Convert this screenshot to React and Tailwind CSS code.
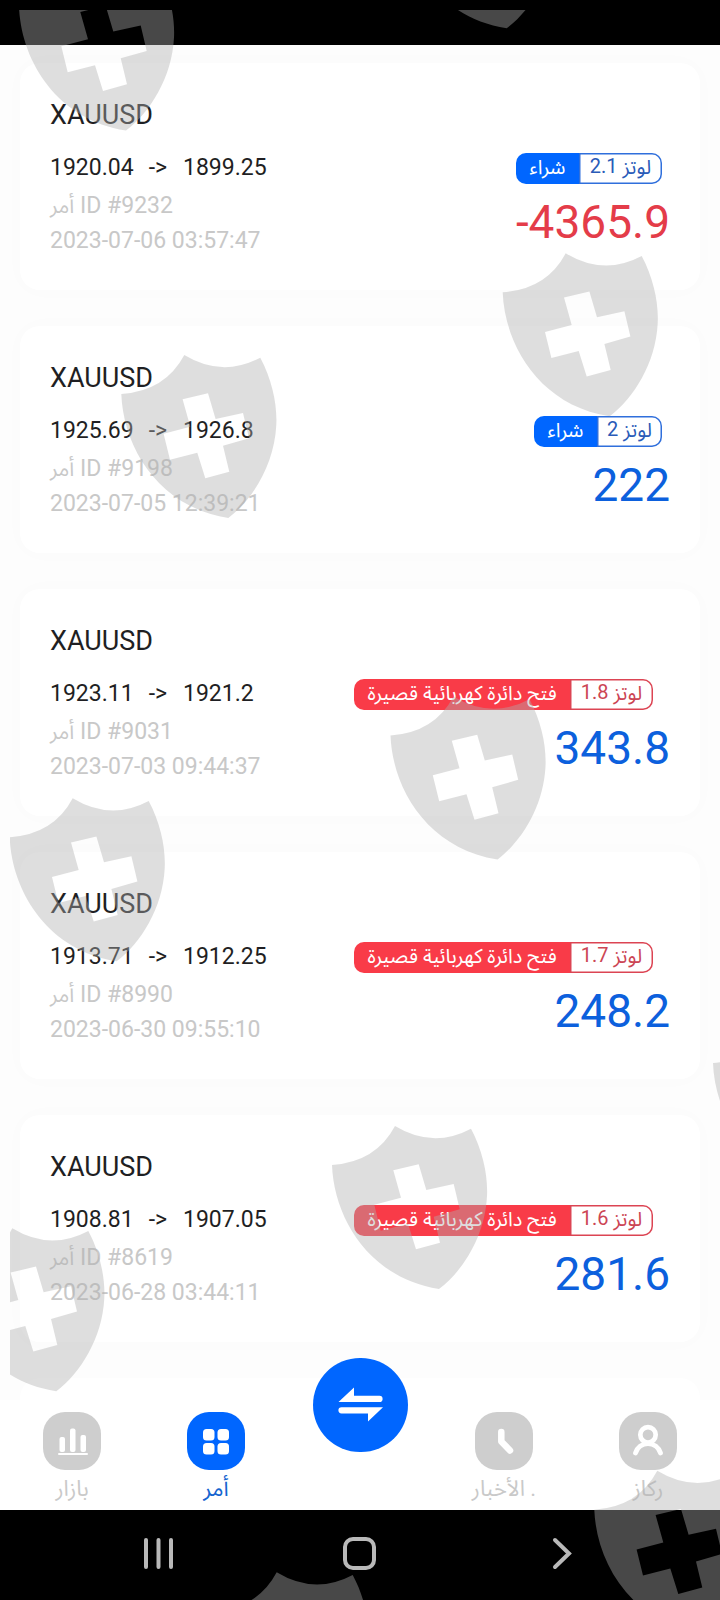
import { clsx } from 'clsx';

const orders = [
  { id: 9232, open: '1920.04', close: '1899.25', time: '2023-07-06 03:57:47', side: 'buy', lots: '2.1', profit: -4365.9 },
  { id: 9198, open: '1925.69', close: '1926.8', time: '2023-07-05 12:39:21', side: 'buy', lots: '2', profit: 222 },
  { id: 9031, open: '1923.11', close: '1921.2', time: '2023-07-03 09:44:37', side: 'sell', lots: '1.8', profit: 343.8 },
  { id: 8990, open: '1913.71', close: '1912.25', time: '2023-06-30 09:55:10', side: 'sell', lots: '1.7', profit: 248.2 },
  { id: 8619, open: '1908.81', close: '1907.05', time: '2023-06-28 03:44:11', side: 'sell', lots: '1.6', profit: 281.6 },
];

// top notch of each shield
const shields = [
  [82, -32.4], [462.7, -134.7], [565.7, 253.3], [184.3, 355], [453.5, 696.5], [72.7, 798.3],
  [395, 1126], [12.3, 1228.3], [657.3, 1470.7], [276.7, 1572.3], [776, 1024],
];

function SideBadge({ side, lots }) {
  const buy = side === 'buy';
  return (
    <div className={clsx('flex h-[31px] text-[20px] leading-[29px]', buy ? 'mr-[8px]' : 'mr-[17px]')}>
      <div
        className={clsx(
          'flex justify-center rounded-l-[10px] text-white',
          buy ? 'w-[63px] bg-[#0066ff]' : 'w-[216px] bg-[#f93b48]'
        )}
      >
        <span dir="rtl">{buy ? 'شراء' : 'فتح دائرة كهربائية قصيرة'}</span>
      </div>
      <div
        className={clsx(
          'flex justify-center rounded-r-[10px]',
          lots.length > 1 ? 'w-[83px]' : 'w-[65px]',
          buy
            ? 'text-[#2a5bb8] shadow-[inset_0_0_0_1.5px_#2f6fdc]'
            : 'text-[#cc4554] shadow-[inset_0_0_0_1.5px_#dc4453]'
        )}
      >
        <span dir="rtl">
          لوتز <span className="relative -top-px">{lots}</span>
        </span>
      </div>
    </div>
  );
}

function OrderCard({ order }) {
  return (
    <div className="flex h-[227px] shrink-0 justify-between rounded-[20px] bg-white pt-[37px] pr-[30px] pl-[30px] shadow-[0_0_24px_rgba(0,0,0,0.016)]">
      <div>
        <div className="h-[54px] text-[27px] leading-[30px] text-[#1f1f23]">XAUUSD</div>
        <div className="flex h-[31px] text-[23px] leading-[28px] text-[#1f1f23]">
          <span>{order.open}</span>
          <span className="mr-[16px] ml-[15px]">-&gt;</span>
          <span>{order.close}</span>
        </div>
        <div dir="ltr" className="mt-[6px] h-[35px] text-[23px] leading-[30px] text-[#c8c8c8]">
          <span className="text-[21px]">أمر</span> ID #{order.id}
        </div>
        <div className="text-[23px] leading-[30px] text-[#c8c8c8]">{order.time}</div>
      </div>
      <div className="flex flex-col items-end pt-[53px]">
        <SideBadge side={order.side} lots={order.lots} />
        <div className={clsx('mt-[11px] text-[46px] leading-[54px]', order.profit < 0 ? 'text-[#e43c49]' : 'text-[#0c60dd]')}>
          {order.profit}
        </div>
      </div>
    </div>
  );
}

function NavItem({ label, active, children }) {
  return (
    <div className="flex w-[144px] flex-col items-center">
      <div className={clsx('flex size-[58px] items-center justify-center rounded-[22px]', active ? 'bg-[#0066ff]' : 'bg-[#cecece]')}>
        <svg width="58" height="58" viewBox="0 0 58 58" fill="none">{children}</svg>
      </div>
      <span dir="rtl" className={clsx('mt-[4px] text-[22px] leading-[30px]', active ? 'text-[#1565d0]' : 'text-[#c9c9c9]')}>
        {label}
      </span>
    </div>
  );
}

function Watermark() {
  return (
    <svg className="pointer-events-none absolute inset-0" width="720" height="1600" viewBox="0 0 720 1600">
      <clipPath id="margin">
        <rect x="10" y="10" width="710" height="1590" />
      </clipPath>
      <g clipPath="url(#margin)" fill="#afafaf" fillOpacity="0.41" fillRule="evenodd">
        {shields.map(([x, y]) => (
          <path
            key={`${x}-${y}`}
            transform={`translate(${x} ${y})`}
            d="M-63 39Q-19 36 0 0Q38 23 76 2.7C88 25 93 50 92 70C90 110 68 145 44 163C-26 152-61 92-63 39ZM-1.7 44.3L23.7 38.3L31.3 64L58.7 58L64.7 83.3L38.7 90.7L45 116.7L21 123.3L13 97.7L-14.3 104.7L-20.7 78.7L6 71.7Z"
          />
        ))}
      </g>
    </svg>
  );
}

export default function App() {
  return (
    <div className="relative flex h-[1600px] w-[720px] flex-col overflow-hidden bg-white font-['Roboto','Noto_Sans_Arabic','Noto_Sans','DejaVu_Sans',sans-serif]">
      <div className="h-[45px] shrink-0 bg-black" />

      {/* closed orders */}
      <div className="flex h-[1355px] shrink-0 flex-col gap-[36px] overflow-hidden bg-[#fdfdfd] px-[20px] pt-[18px]">
        {orders.map((order) => (
          <OrderCard key={order.id} order={order} />
        ))}
        <div className="h-[227px] shrink-0 rounded-[20px] bg-white" />
      </div>

      {/* tab bar */}
      <div className="flex h-[110px] shrink-0 bg-white pt-[12px]">
        <NavItem label="بازار">
          <g fill="white">
            <rect x="16.5" y="25" width="5.5" height="15" rx="2" />
            <rect x="27" y="16.5" width="5.5" height="23.5" rx="2" />
            <rect x="37.5" y="23" width="5.5" height="17" rx="2" />
            <rect x="15" y="41" width="30" height="2" rx="1" />
          </g>
        </NavItem>
        <NavItem label="أمر" active>
          <g fill="white">
            <rect x="16" y="17" width="11.5" height="11.5" rx="3.5" />
            <rect x="30.5" y="17" width="11.5" height="11.5" rx="3.5" />
            <rect x="16" y="31" width="11.5" height="11.5" rx="3.5" />
            <rect x="30.5" y="31" width="11.5" height="11.5" rx="3.5" />
          </g>
        </NavItem>
        <div className="flex w-[144px] justify-center">
          <div className="-mt-[54px] h-[94px] w-[95px] rounded-full bg-[#0066ff]">
            <svg width="95" height="94" viewBox="0 0 95 94" fill="white">
              <path d="M25.5 44L41 29.5V37.8H66.5A3.1 3.1 0 0 1 66.5 44ZM70 49.2L55 63.5V55.4H28.5A3.1 3.1 0 0 1 28.5 49.2Z" />
            </svg>
          </div>
        </div>
        <NavItem label=". الأخبار">
          <path d="M26.3 20V29.5L35 38.5" stroke="white" strokeWidth="6.5" strokeLinecap="round" strokeLinejoin="round" />
        </NavItem>
        <NavItem label="ركاز">
          <circle cx="29" cy="22.8" r="7.7" stroke="white" strokeWidth="4.7" />
          <path d="M16.5 41A13 13 0 0 1 41.5 41" stroke="white" strokeWidth="4.8" strokeLinecap="round" />
        </NavItem>
      </div>

      {/* system navigation */}
      <div className="flex h-[90px] shrink-0 justify-between bg-black pt-[27px] pr-[147px] pl-[143px]">
        <svg width="32" height="32" viewBox="0 0 32 32" stroke="#b9b9b9" strokeWidth="4" strokeLinecap="round">
          <path d="M3 3V30M15.5 3V30M28 3V30" />
        </svg>
        <div className="mr-[7px] size-[33px] rounded-[10px] border-[4px] border-[#b9b9b9]" />
        <svg width="22" height="34" viewBox="0 0 22 34" fill="none" stroke="#b9b9b9" strokeWidth="4" strokeLinecap="round">
          <path d="M4 3L18 16.5L4 30" />
        </svg>
      </div>

      <Watermark />
    </div>
  );
}
